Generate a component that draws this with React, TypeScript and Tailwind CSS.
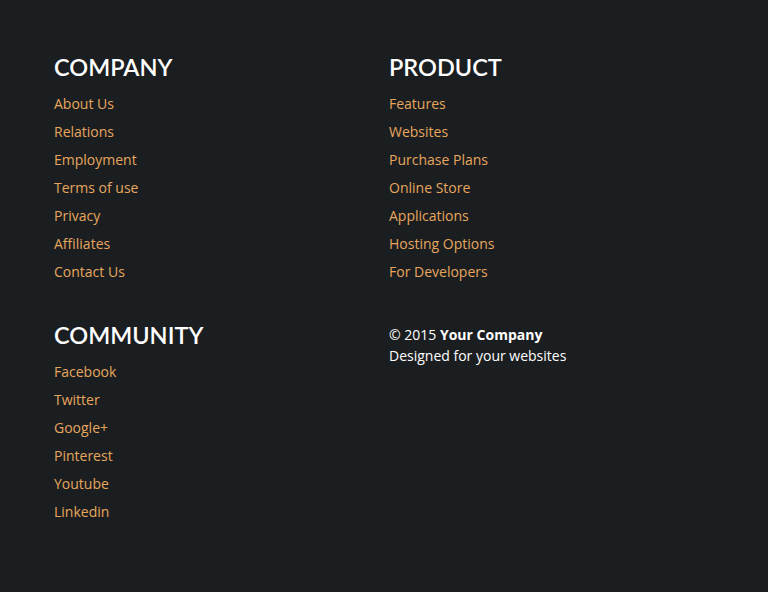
import React from "react";

const company = ["About Us", "Relations", "Employment", "Terms of use", "Privacy", "Affiliates", "Contact Us"];
const product = ["Features", "Websites", "Purchase Plans", "Online Store", "Applications", "Hosting Options", "For Developers"];
const community = ["Facebook", "Twitter", "Google+", "Pinterest", "Youtube", "Linkedin"];

function Section({ title, links }: { title: string; links: string[] }) {
  return (
    <div>
      <h3 className="text-[23.5px] leading-[32px] font-semibold text-white" style={{ fontFamily: "Lato, 'Open Sans', sans-serif" }}>
        {title}
      </h3>
      <ul className="mt-[7px]">
        {links.map((l) => (
          <li key={l} className="text-[14px] leading-[28px] text-[#e6a65e]">
            <a href="#">{l}</a>
          </li>
        ))}
      </ul>
    </div>
  );
}

export default function App() {
  return (
    <div className="w-[768px] h-[592px] bg-[#1b1e20] overflow-hidden" style={{ fontFamily: "'Open Sans', sans-serif" }}>
      <div className="grid grid-cols-[335px_1fr] gap-y-[33px] pl-[54px] pt-[51px]">
        <Section title="COMPANY" links={company} />
        <Section title="PRODUCT" links={product} />
        <Section title="COMMUNITY" links={community} />
        <div className="pt-[5px] text-[14px] leading-[21px] text-white">
          <p>
            © 2015 <span className="font-bold">Your Company</span>
          </p>
          <p>Designed for your websites</p>
        </div>
      </div>
    </div>
  );
}
